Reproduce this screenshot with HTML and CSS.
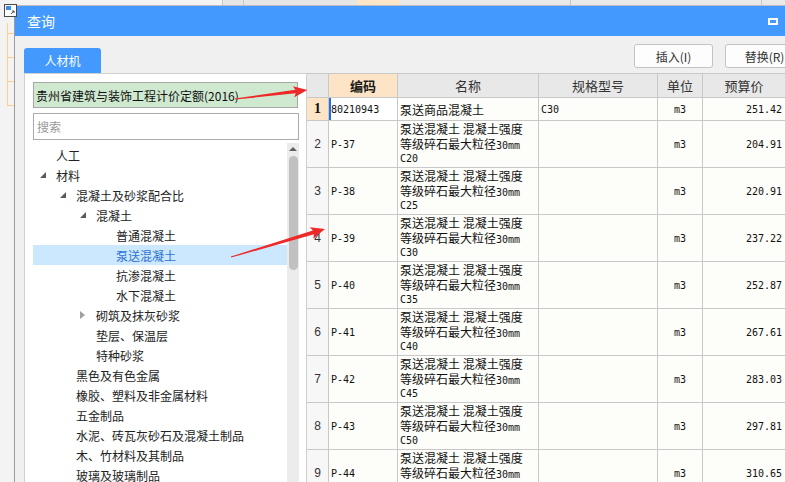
FILE: index.html
```html
<!DOCTYPE html>
<html lang="zh-CN">
<head>
<meta charset="utf-8">
<title>查询</title>
<link rel="stylesheet" href="styles.css">
</head>
<body>
<div class="screen">
  <div class="gutter">
    <svg class="app-icon" width="13" height="13" viewBox="0 0 13 13">
      <rect x="0.5" y="0.5" width="12" height="12" fill="#fff" stroke="#4a4a4a"/>
      <rect x="2" y="2" width="5" height="4" fill="#3b8ee8"/>
      <path d="M7 10 L10 7 M8 7 H10 V9" stroke="#4a4a4a" fill="none"/>
    </svg>
    <div class="gline"><span></span><span></span><span></span><span></span></div>
  </div>
  <div class="main">
    <div class="strip"></div>
    <div class="dialog">
      <div class="titlebar"><span class="title">查询</span><span class="maxbtn"></span></div>
      <div class="body">
        <div class="toolbar">
          <div class="tab">人材机</div>
          <div class="actions">
            <button class="btn">插入(I)</button>
            <button class="btn">替换(R)</button>
          </div>
        </div>
        <div class="content">
          <div class="left">
            <div class="lib">贵州省建筑与装饰工程计价定额(2016)</div>
            <div class="search">搜索</div>
            <div class="tree">
              <div class="nodes">
                <div class="node l0"><span class="tg"></span>人工</div>
                <div class="node l0"><span class="tg"><i class="exp"></i></span>材料</div>
                <div class="node l1"><span class="tg"><i class="exp"></i></span>混凝土及砂浆配合比</div>
                <div class="node l2"><span class="tg"><i class="exp"></i></span>混凝土</div>
                <div class="node l3"><span class="tg"></span>普通混凝土</div>
                <div class="node l3 sel"><span class="tg"></span>泵送混凝土</div>
                <div class="node l3"><span class="tg"></span>抗渗混凝土</div>
                <div class="node l3"><span class="tg"></span>水下混凝土</div>
                <div class="node l2"><span class="tg"><i class="col"></i></span>砌筑及抹灰砂浆</div>
                <div class="node l2"><span class="tg"></span>垫层、保温层</div>
                <div class="node l2"><span class="tg"></span>特种砂浆</div>
                <div class="node l1"><span class="tg"></span>黑色及有色金属</div>
                <div class="node l1"><span class="tg"></span>橡胶、塑料及非金属材料</div>
                <div class="node l1"><span class="tg"></span>五金制品</div>
                <div class="node l1"><span class="tg"></span>水泥、砖瓦灰砂石及混凝土制品</div>
                <div class="node l1"><span class="tg"></span>木、竹材料及其制品</div>
                <div class="node l1"><span class="tg"></span>玻璃及玻璃制品</div>
              </div>
              <div class="scroll"><i class="up"></i><i class="thumb"></i></div>
            </div>
          </div>
          <div class="grid">
            <div class="h"></div>
            <div class="h key">编码</div>
            <div class="h">名称</div>
            <div class="h">规格型号</div>
            <div class="h">单位</div>
            <div class="h">预算价</div>

            <div class="rh cur">1</div>
            <div class="c code focus">80210943</div>
            <div class="c name one">泵送商品混凝土</div>
            <div class="c spec">C30</div>
            <div class="c unit">m3</div>
            <div class="c price">251.42</div>

            <div class="rh">2</div>
            <div class="c code">P-37</div>
            <div class="c name"><span class="ln">泵送混凝土 混凝土强度</span><span class="ln">等级碎石最大粒径<span class="m">30mm</span></span><span class="ln m">C20</span></div>
            <div class="c spec"></div>
            <div class="c unit">m3</div>
            <div class="c price">204.91</div>

            <div class="rh">3</div>
            <div class="c code">P-38</div>
            <div class="c name"><span class="ln">泵送混凝土 混凝土强度</span><span class="ln">等级碎石最大粒径<span class="m">30mm</span></span><span class="ln m">C25</span></div>
            <div class="c spec"></div>
            <div class="c unit">m3</div>
            <div class="c price">220.91</div>

            <div class="rh">4</div>
            <div class="c code">P-39</div>
            <div class="c name"><span class="ln">泵送混凝土 混凝土强度</span><span class="ln">等级碎石最大粒径<span class="m">30mm</span></span><span class="ln m">C30</span></div>
            <div class="c spec"></div>
            <div class="c unit">m3</div>
            <div class="c price">237.22</div>

            <div class="rh">5</div>
            <div class="c code">P-40</div>
            <div class="c name"><span class="ln">泵送混凝土 混凝土强度</span><span class="ln">等级碎石最大粒径<span class="m">30mm</span></span><span class="ln m">C35</span></div>
            <div class="c spec"></div>
            <div class="c unit">m3</div>
            <div class="c price">252.87</div>

            <div class="rh">6</div>
            <div class="c code">P-41</div>
            <div class="c name"><span class="ln">泵送混凝土 混凝土强度</span><span class="ln">等级碎石最大粒径<span class="m">30mm</span></span><span class="ln m">C40</span></div>
            <div class="c spec"></div>
            <div class="c unit">m3</div>
            <div class="c price">267.61</div>

            <div class="rh">7</div>
            <div class="c code">P-42</div>
            <div class="c name"><span class="ln">泵送混凝土 混凝土强度</span><span class="ln">等级碎石最大粒径<span class="m">30mm</span></span><span class="ln m">C45</span></div>
            <div class="c spec"></div>
            <div class="c unit">m3</div>
            <div class="c price">283.03</div>

            <div class="rh">8</div>
            <div class="c code">P-43</div>
            <div class="c name"><span class="ln">泵送混凝土 混凝土强度</span><span class="ln">等级碎石最大粒径<span class="m">30mm</span></span><span class="ln m">C50</span></div>
            <div class="c spec"></div>
            <div class="c unit">m3</div>
            <div class="c price">297.81</div>

            <div class="rh">9</div>
            <div class="c code">P-44</div>
            <div class="c name"><span class="ln">泵送混凝土 混凝土强度</span><span class="ln">等级碎石最大粒径<span class="m">30mm</span></span><span class="ln m">C55</span></div>
            <div class="c spec"></div>
            <div class="c unit">m3</div>
            <div class="c price">310.65</div>
          </div>
        </div>
      </div>
    </div>
  </div>
  <svg class="arrows" width="785" height="482" viewBox="0 0 785 482">
    <g transform="translate(235 99) rotate(-7.1)">
      <polygon points="0,-0.4 61,-1.8 59,-5.5 73,0 59,5.5 61,1.8 0,0.6" fill="#ef2828"/>
    </g>
    <g transform="translate(231 257) rotate(-16.6)">
      <polygon points="0,-0.4 86,-2 84,-6 98,0 84,6 86,2 0,0.6" fill="#ef2828"/>
    </g>
  </svg>
</div>
</body>
</html>
```

FILE: styles.css
```css
body {
  margin: 0;
  background: #f3f3f3;
  font-family: "Noto Sans CJK SC", "Microsoft YaHei", sans-serif;
  font-size: 12px;
  color: #222;
}

.screen {
  position: relative;
  width: 785px;
  height: 482px;
  overflow: hidden;
  display: flex;
}

.gutter {
  width: 14px;
  flex: none;
}

.app-icon {
  position: absolute;
  left: 4px;
  top: 4px;
  z-index: 2;
}

.gline {
  margin: 23px 0 0 7px;
  width: 7px;
  border-left: 1px solid #ffcf8a;
}

.gline span {
  display: block;
  height: 23px;
  border-bottom: 1px solid #ffcf8a;
}

.gline span:first-child {
  height: 10px;
}

.main {
  flex: 1;
  min-width: 0;
  display: flex;
  flex-direction: column;
}

.strip {
  height: 5px;
  flex: none;
  background: linear-gradient(to right,
    #f3f3f3 0, #f3f3f3 208px,
    #c8c8c8 208px, #c8c8c8 209px,
    #e6e6e6 209px, #e6e6e6 229px,
    #c8c8c8 229px, #c8c8c8 230px,
    #e6e6e6 230px, #e6e6e6 343px,
    #ffe6c6 343px, #ffe6c6 386px,
    #e9e9e9 386px, #e9e9e9 556px,
    #c8c8c8 556px, #c8c8c8 557px,
    #e9e9e9 557px, #e9e9e9 747px,
    #c8c8c8 747px, #c8c8c8 748px,
    #e9e9e9 748px);
}

.dialog {
  flex: 1;
  min-height: 0;
  display: flex;
  flex-direction: column;
  border-left: 1px solid #9c9c9c;
  border-top: 1px solid #bdbdbd;
  background: #f0f0f0;
  overflow: hidden;
}

.titlebar {
  height: 30px;
  flex: none;
  background: #4499ff;
  display: flex;
  align-items: center;
  justify-content: space-between;
  padding: 0 7px 0 12px;
}

.title {
  color: #fff;
  font-size: 14px;
}

.maxbtn {
  width: 10px;
  height: 7px;
  box-sizing: border-box;
  border: 2px solid #fff;
}

.body {
  flex: 1;
  min-height: 0;
  display: flex;
  flex-direction: column;
  padding-left: 9px;
}

.toolbar {
  height: 37px;
  flex: none;
  display: flex;
  justify-content: space-between;
}

.tab {
  align-self: flex-end;
  width: 77px;
  height: 25px;
  background: #4499ff;
  color: #fff;
  border-radius: 3px 3px 0 0;
  display: flex;
  align-items: center;
  justify-content: center;
  font-size: 12px;
}

.actions {
  align-self: flex-start;
  display: flex;
  gap: 12px;
  margin-top: 8px;
  margin-right: -19px;
}

.btn {
  width: 79px;
  height: 24px;
  padding: 0;
  border: 1px solid #c3c3c3;
  border-radius: 3px;
  background: #fdfdfd;
  font-family: "Noto Sans CJK SC", sans-serif;
  font-size: 12px;
  color: #333;
}

.content {
  flex: 1;
  min-height: 0;
  display: flex;
}

.left {
  width: 283px;
  flex: none;
  box-sizing: border-box;
  border: 1px solid #d0d0d0;
  border-bottom: 0;
  background: #fff;
  padding: 8px 7px 0 8px;
  display: flex;
  flex-direction: column;
  min-height: 0;
}

.lib {
  height: 26px;
  flex: none;
  box-sizing: border-box;
  margin-right: 1px;
  border: 1px solid #a8a8a8;
  background: #cfe8d0;
  padding-left: 2px;
  display: flex;
  align-items: center;
  color: #111;
  white-space: nowrap;
}

.search {
  height: 27px;
  flex: none;
  margin-top: 5px;
  box-sizing: border-box;
  border: 1px solid #ababab;
  padding-left: 3px;
  display: flex;
  align-items: center;
  color: #9a9a9a;
}

.tree {
  flex: 1;
  min-height: 0;
  margin-top: 3px;
  display: flex;
}

.nodes {
  flex: 1;
  padding-top: 2px;
}

.node {
  height: 20px;
  display: flex;
  align-items: center;
  white-space: nowrap;
  padding-left: 7px;
}

.node.l1 { padding-left: 27px; }
.node.l2 { padding-left: 47px; }
.node.l3 { padding-left: 67px; }

.node.sel {
  background: #cce8ff;
  color: #2e72d2;
}

.tg {
  width: 16px;
  flex: none;
  display: flex;
  align-items: center;
}

.exp {
  width: 0;
  height: 0;
  border-left: 6px solid transparent;
  border-bottom: 6px solid #5a5a5a;
}

.col {
  width: 0;
  height: 0;
  border-top: 4px solid transparent;
  border-bottom: 4px solid transparent;
  border-left: 5px solid #a0a0a0;
}

.scroll {
  width: 12px;
  flex: none;
  background: #ececec;
  display: flex;
  flex-direction: column;
  align-items: center;
}

.up {
  margin-top: 4px;
  width: 0;
  height: 0;
  border-left: 4px solid transparent;
  border-right: 4px solid transparent;
  border-bottom: 4px solid #606060;
}

.thumb {
  margin-top: 5px;
  width: 9px;
  height: 114px;
  border-radius: 5px;
  background: #c1c1c1;
}

.grid {
  flex: 1;
  min-width: 0;
  display: grid;
  grid-template-columns: 21px 68px 140px 118px 44px 82px;
  grid-template-rows: 23px 22px repeat(8, 46px);
  gap: 1px;
  align-content: start;
  background: #c8c8c8;
  border-top: 1px solid #c8c8c8;
}

.h {
  background: #e8e8e8;
  display: flex;
  align-items: center;
  justify-content: center;
  font-size: 13px;
  color: #333;
}

.h.key {
  background: #fde4c6;
  font-weight: bold;
  color: #1a1a1a;
}

.rh {
  background: #f7f7f7;
  display: flex;
  align-items: center;
  justify-content: center;
  font-family: "Liberation Sans", sans-serif;
  font-size: 12px;
  color: #333;
}

.rh.cur {
  background: #fde4c6;
  font-family: "Liberation Serif", serif;
  font-weight: bold;
  font-size: 14px;
  color: #111;
}

.c {
  background: #fdfdf9;
  overflow: hidden;
  color: #111;
}

.code {
  display: flex;
  align-items: center;
  padding-left: 2px;
  font-family: "DejaVu Sans Mono", monospace;
  font-size: 10px;
}

.code.focus {
  background: #fff;
  box-shadow: inset 2px 0 #1f6fe5;
}

.name {
  padding: 0 0 0 2px;
  line-height: 15px;
  white-space: nowrap;
}

.name.one {
  display: flex;
  align-items: center;
}

.ln {
  display: block;
  height: 15px;
}

.m {
  font-family: "DejaVu Sans Mono", monospace;
  font-size: 10px;
}

.spec {
  display: flex;
  align-items: center;
  padding-left: 2px;
  font-family: "DejaVu Sans Mono", monospace;
  font-size: 10px;
}

.unit {
  display: flex;
  align-items: center;
  justify-content: center;
  font-family: "DejaVu Sans Mono", monospace;
  font-size: 10px;
}

.price {
  display: flex;
  align-items: center;
  justify-content: flex-end;
  padding-right: 3px;
  font-family: "DejaVu Sans Mono", monospace;
  font-size: 10px;
}

.arrows {
  position: absolute;
  left: 0;
  top: 0;
  pointer-events: none;
}
```
